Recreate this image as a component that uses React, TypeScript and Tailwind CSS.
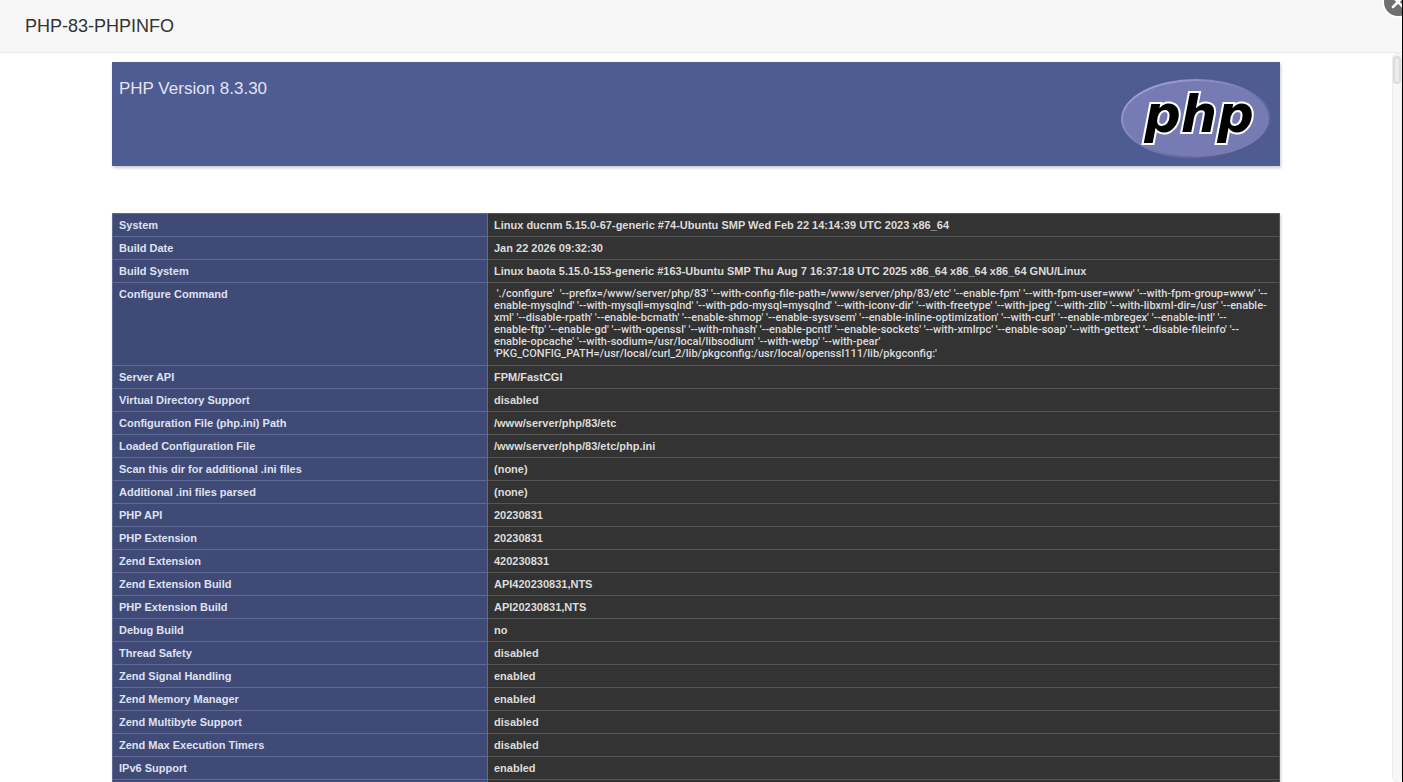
import { X } from 'lucide-react'

interface InfoRow {
  name: string
  value: string
}

const configureCommand = [
  " './configure'  '--prefix=/www/server/php/83' '--with-config-file-path=/www/server/php/83/etc' '--enable-fpm' '--with-fpm-user=www' '--with-fpm-group=www' '--",
  "enable-mysqlnd' '--with-mysqli=mysqlnd' '--with-pdo-mysql=mysqlnd' '--with-iconv-dir' '--with-freetype' '--with-jpeg' '--with-zlib' '--with-libxml-dir=/usr' '--enable-",
  "xml' '--disable-rpath' '--enable-bcmath' '--enable-shmop' '--enable-sysvsem' '--enable-inline-optimization' '--with-curl' '--enable-mbregex' '--enable-intl' '--",
  "enable-ftp' '--enable-gd' '--with-openssl' '--with-mhash' '--enable-pcntl' '--enable-sockets' '--with-xmlrpc' '--enable-soap' '--with-gettext' '--disable-fileinfo' '--",
  "enable-opcache' '--with-sodium=/usr/local/libsodium' '--with-webp' '--with-pear'",
  "'PKG_CONFIG_PATH=/usr/local/curl_2/lib/pkgconfig:/usr/local/openssl111/lib/pkgconfig:'",
].join('\n')

const rows: InfoRow[] = [
  { name: 'System', value: 'Linux ducnm 5.15.0-67-generic #74-Ubuntu SMP Wed Feb 22 14:14:39 UTC 2023 x86_64' },
  { name: 'Build Date', value: 'Jan 22 2026 09:32:30' },
  { name: 'Build System', value: 'Linux baota 5.15.0-153-generic #163-Ubuntu SMP Thu Aug 7 16:37:18 UTC 2025 x86_64 x86_64 x86_64 GNU/Linux' },
  { name: 'Configure Command', value: configureCommand },
  { name: 'Server API', value: 'FPM/FastCGI' },
  { name: 'Virtual Directory Support', value: 'disabled' },
  { name: 'Configuration File (php.ini) Path', value: '/www/server/php/83/etc' },
  { name: 'Loaded Configuration File', value: '/www/server/php/83/etc/php.ini' },
  { name: 'Scan this dir for additional .ini files', value: '(none)' },
  { name: 'Additional .ini files parsed', value: '(none)' },
  { name: 'PHP API', value: '20230831' },
  { name: 'PHP Extension', value: '20230831' },
  { name: 'Zend Extension', value: '420230831' },
  { name: 'Zend Extension Build', value: 'API420230831,NTS' },
  { name: 'PHP Extension Build', value: 'API20230831,NTS' },
  { name: 'Debug Build', value: 'no' },
  { name: 'Thread Safety', value: 'disabled' },
  { name: 'Zend Signal Handling', value: 'enabled' },
  { name: 'Zend Memory Manager', value: 'enabled' },
  { name: 'Zend Multibyte Support', value: 'disabled' },
  { name: 'Zend Max Execution Timers', value: 'disabled' },
  { name: 'IPv6 Support', value: 'enabled' },
]

function PhpLogo() {
  return (
    <svg width="152" height="82" viewBox="0 0 152 82" role="img" aria-label="PHP logo">
      <defs>
        <linearGradient id="rim" x1="0" y1="0" x2="1" y2="1">
          <stop offset="0" stopColor="#a9aedb" />
          <stop offset="0.5" stopColor="#777bb3" />
          <stop offset="1" stopColor="#41487f" />
        </linearGradient>
      </defs>
      <ellipse cx="76" cy="41" rx="75" ry="40" fill="url(#rim)" />
      <ellipse cx="76" cy="41" rx="73" ry="38" fill="#777bb3" />
      <text
        x="79"
        y="54"
        textAnchor="middle"
        fontSize="51"
        fontWeight="700"
        fontStyle="italic"
        fontFamily="'DejaVu Sans', sans-serif"
        fill="#000"
        stroke="#fff"
        strokeWidth="4"
        paintOrder="stroke"
      >
        php
      </text>
    </svg>
  )
}

export default function App() {
  return (
    <div className="relative flex h-screen flex-col overflow-hidden border-r border-black bg-white font-['Liberation_Sans',Arial,sans-serif]">
      {/* Title bar */}
      <div className="flex shrink-0 items-center border-b border-[#eaeaea] bg-[#f7f7f7] px-[25px] py-3.5">
        <h2 className="text-lg leading-6 text-[#333]">PHP-83-PHPINFO</h2>
      </div>
      <button
        aria-label="Close"
        className="absolute -top-3.5 -right-3 flex h-8 w-8 items-center justify-center rounded-full border-2 border-white bg-[#707070] text-white"
      >
        <X className="h-5 w-5" strokeWidth={3} />
      </button>

      <div className="flex min-h-0 flex-1">
        <main className="min-w-0 flex-1 overflow-hidden px-28 pt-[9px]">
          <div className="flex items-start justify-between bg-[#4f5b93] pt-4 pr-2 pb-1.5 pl-[7px] shadow-[1px_2px_3px_#ccc]">
            <h1 className="text-[17px] leading-[22px] text-[#e2e4ef]">PHP Version 8.3.30</h1>
            <PhpLogo />
          </div>

          <table className="mt-[47px] w-full table-fixed border-collapse text-left text-[11px] leading-3 font-bold shadow-[1px_2px_3px_#ccc]">
            <tbody>
              {rows.map((row) => (
                <tr key={row.name}>
                  <th
                    scope="row"
                    className="w-[375px] border border-[#5f6a97] bg-[#404a77] px-1.5 py-[5px] align-top font-bold text-[#dfe1f0]"
                  >
                    {row.name}
                  </th>
                  <td
                    className={
                      row.value === configureCommand
                        ? "border border-[#555] bg-[#333] py-[5px] pl-1.5 align-top font-['Roboto','Liberation_Sans',sans-serif] font-medium whitespace-pre text-[#dcdcdc]"
                        : 'border border-[#555] bg-[#333] px-1.5 py-[5px] align-top text-[#dcdcdc]'
                    }
                  >
                    {row.value}
                  </td>
                </tr>
              ))}
              <tr>
                <th className="border border-[#5f6a97] bg-[#404a77] py-[5px]">&nbsp;</th>
                <td className="border border-[#555] bg-[#333] py-[5px]">&nbsp;</td>
              </tr>
            </tbody>
          </table>
        </main>

        {/* Scrollbar */}
        <div className="w-2.5 shrink-0 rounded-md border border-[#ececec] bg-[#f7f7f7]">
          <div className="mt-0.5 h-7 rounded-md border-2 border-[#dcdcdc] bg-[#ececec]" />
        </div>
      </div>
    </div>
  )
}
